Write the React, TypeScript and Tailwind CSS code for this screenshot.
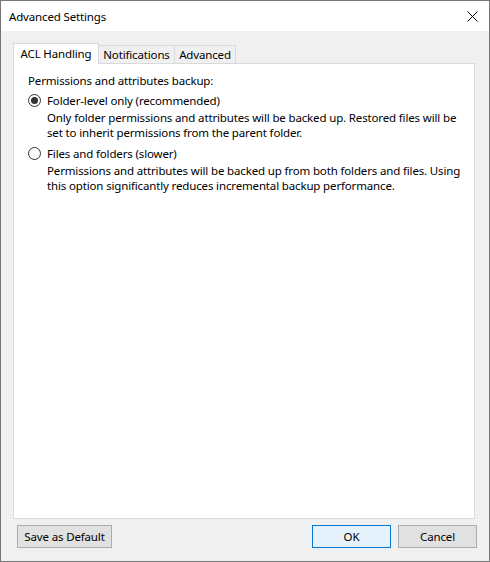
import React from "react";

function Radio({ checked }: { checked: boolean }) {
  return (
    <span className="w-[13px] h-[13px] rounded-full border border-[#333333] bg-white flex items-center justify-center shrink-0">
      {checked && <span className="w-[7px] h-[7px] rounded-full bg-[#333333]" />}
    </span>
  );
}

export default function App() {
  return (
    <div
      className="w-[490px] h-[562px] border border-[#767676] bg-[#f0f0f0] flex flex-col text-[11.5px] tracking-[-0.15px] leading-[15px] text-black whitespace-nowrap"
      style={{ fontFamily: '"Noto Sans", "Open Sans", sans-serif' }}
    >
      <div className="h-[30px] bg-white flex items-center justify-between pl-[8px] pr-[10px]">
        <span>Advanced Settings</span>
        <svg width="11" height="11" viewBox="0 0 11 11" className="mr-[1px]">
          <path d="M0.5 0.5 L10.5 10.5 M10.5 0.5 L0.5 10.5" stroke="#000" strokeWidth="1" />
        </svg>
      </div>
      <div className="flex-1 flex flex-col pt-[12px] pl-[12px] pr-[14px]">
        <div className="h-[20px] flex items-end relative z-10">
          <div className="h-[21px] mb-[-1px] w-[86px] bg-white border border-b-0 border-[#d9d9d9] flex items-center justify-center pb-[2px]">
            ACL Handling
          </div>
          <div className="h-[18px] w-[76px] bg-[#f0f0f0] border border-l-0 border-b-0 border-[#d9d9d9] flex items-center justify-center">
            Notifications
          </div>
          <div className="h-[18px] w-[61px] bg-[#f0f0f0] border border-l-0 border-b-0 border-[#d9d9d9] flex items-center justify-center">
            Advanced
          </div>
        </div>
        <div className="h-[456px] bg-white border border-[#d9d9d9] pt-[9px] pl-[14px] pr-[10px]">
          <div>Permissions and attributes backup:</div>
          <div className="mt-[5px] flex items-center gap-[6px]">
            <Radio checked />
            <span>Folder-level only (recommended)</span>
          </div>
          <div className="pl-[19px] mt-[2px]">
            <div>Only folder permissions and attributes will be backed up. Restored files will be</div>
            <div>set to inherit permissions from the parent folder.</div>
          </div>
          <div className="mt-[6px] flex items-center gap-[6px]">
            <Radio checked={false} />
            <span>Files and folders (slower)</span>
          </div>
          <div className="pl-[19px] mt-[2px]">
            <div>Permissions and attributes will be backed up from both folders and files. Using</div>
            <div>this option significantly reduces incremental backup performance.</div>
          </div>
        </div>
        <div className="mt-[6px] flex items-center pl-[4px] mr-[-2px]">
          <button className="h-[23px] w-[95px] border border-[#adadad] bg-[#e1e1e1] flex items-center justify-center">
            Save as Default
          </button>
          <div className="flex-1" />
          <button className="h-[23px] w-[79px] border border-[#0078d7] bg-[#e5f1fb] flex items-center justify-center">
            OK
          </button>
          <button className="ml-[7px] h-[23px] w-[79px] border border-[#adadad] bg-[#e1e1e1] flex items-center justify-center">
            Cancel
          </button>
        </div>
      </div>
    </div>
  );
}
